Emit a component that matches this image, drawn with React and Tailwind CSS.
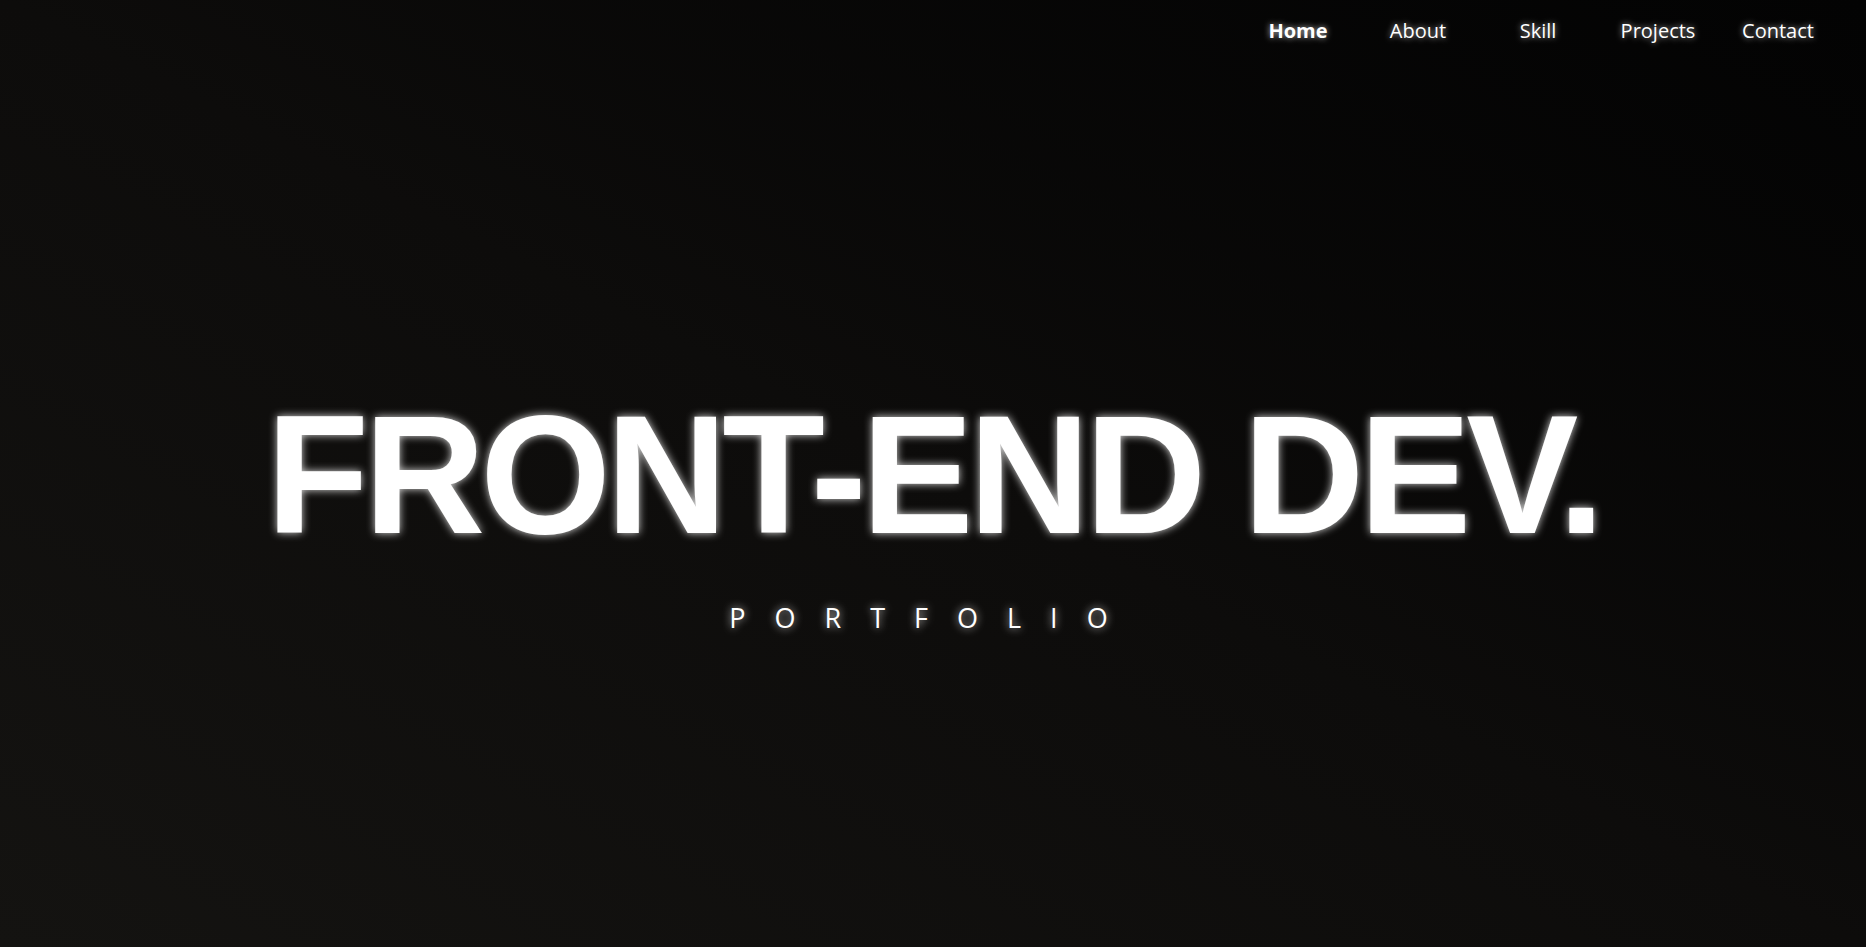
import React from "react";

const links = ["Home", "About", "Skill", "Projects", "Contact"];

export default function App() {
  return (
    <div className="relative min-h-screen h-[947px] overflow-hidden bg-gradient-to-tr from-[#141311] via-[#0d0c0b] to-[#030303] text-white">
      {/* nav */}
      <nav className="flex justify-end pr-[28px] pt-[17px] font-['Open_Sans',sans-serif]">
        {links.map((l, i) => (
          <a
            key={l}
            className={`w-[120px] text-center text-[20px] leading-[28px] [text-shadow:0_0_6px_rgba(255,255,255,0.7)] ${
              i === 0 ? "font-bold" : "font-normal"
            }`}
          >
            {l}
          </a>
        ))}
      </nav>

      {/* hero */}
      <div className="flex flex-col items-center pt-[346px]">
        <h1 className="font-['Liberation_Sans',Arial,sans-serif] font-bold text-[168px] leading-[168px] tracking-[-5px] [text-shadow:0_0_9px_rgba(255,255,255,0.85)]">
          FRONT-END DEV.
        </h1>
        <p className="mt-[41px] font-['Open_Sans',sans-serif] font-normal text-[27px] leading-[36px] tracking-[29px] [text-shadow:0_0_8px_rgba(255,255,255,0.8)]">
          PORTFOLIO
        </p>
      </div>
    </div>
  );
}
